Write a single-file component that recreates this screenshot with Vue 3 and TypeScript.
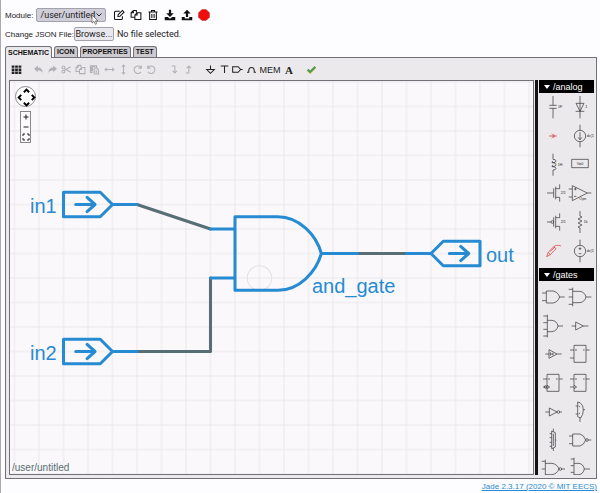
<script setup lang="ts">
import { ref } from 'vue'

interface Tool {
  id: string
  title: string
  path: string
  fill?: boolean
}

interface Part {
  name: string
  d: string
  red?: boolean
  label?: string
  lx?: number
  ly?: number
}

interface Library {
  name: string
  rows: number
  parts: Part[]
}

const modulePath = ref('/user/untitled')
const activeTab = ref('SCHEMATIC')
const tabs = ['SCHEMATIC', 'ICON', 'PROPERTIES', 'TEST']
const fileInput = ref<HTMLInputElement | null>(null)
const fileName = ref('No file selected.')

function browse(): void {
  fileInput.value?.click()
}

function fileChosen(): void {
  fileName.value = fileInput.value?.files?.[0]?.name ?? 'No file selected.'
}

const moduleTools: Tool[] = [
  { id: 'edit', title: 'Edit module', path: 'M9 3H3.5Q2 3 2 4.500V12.500Q2 14 3.500 14H11Q12.500 14 12.500 12.500V9.500M6.500 10L7 7.500L12.500 2L14.700 4.200L9.200 9.700Z' },
  { id: 'copy', title: 'Copy module', path: 'M6 11H1.500V5L4.500 2H8.500V4.500M4.500 2V5H1.500M6.500 8L9.500 5H14.500V14H6.500ZM9.500 5V8H6.500' },
  { id: 'delete', title: 'Delete module', path: 'M2 4H14M6 4V2H10V4M3.500 4V14H12.500V4M6.500 6.500V12M9.500 6.500V12' },
  { id: 'download', title: 'Download modules', path: 'M6.500 1H9.500V5.500H13L8 10.500L3 5.500H6.500ZM1 10.500H5L8 13L11 10.500H15V15H1Z', fill: true },
  { id: 'upload', title: 'Upload modules', path: 'M8 1L13 6H9.500V10.500H6.500V6H3ZM1 10.500H5V12.500H11V10.500H15V15H1Z', fill: true },
]

const editTools: Tool[] = [
  { id: 'undo', title: 'Undo', path: 'M7 2V5Q14 5 14 13Q12 9 7 9V12L1.500 7Z', fill: true },
  { id: 'redo', title: 'Redo', path: 'M9 2V5Q2 5 2 13Q4 9 9 9V12L14.500 7Z', fill: true },
  { id: 'cut', title: 'Cut', path: 'M5.500 9L14 4M5.500 7L14 12M5.500 5A2 2 0 1 1 1.500 5A2 2 0 1 1 5.500 5M5.500 11A2 2 0 1 1 1.500 11A2 2 0 1 1 5.500 11' },
  { id: 'clone', title: 'Copy', path: 'M6 11H1.500V5L4.500 2H8.500V4.500M4.500 2V5H1.500M6.500 8L9.500 5H14.500V14H6.500ZM9.500 5V8H6.500' },
  { id: 'paste', title: 'Paste', path: 'M5.500 12.500H2V2.500H11V5M4 3.500H9M3.500 4V11M5 4V11M7.500 6H11.500L14 8.500V14.500H7.500ZM9.500 10H12M9.500 12H12' },
  { id: 'flip-h', title: 'Flip horizontally', path: 'M1.500 8H14.500M4 5.500L1.500 8L4 10.500M12 5.500L14.500 8L12 10.500' },
  { id: 'flip-v', title: 'Flip vertically', path: 'M8 1.500V14.500M5.500 4L8 1.500L10.500 4M5.500 12L8 14.500L10.500 12' },
  { id: 'rotate-cw', title: 'Rotate clockwise', path: 'M13 11.500A5.500 5.500 0 1 1 12 4L13 5.500M13.500 2V6H9.500' },
  { id: 'rotate-ccw', title: 'Rotate counterclockwise', path: 'M3 11.500A5.500 5.500 0 1 0 4 4L3 5.500M2.500 2V6H6.500' },
]

const levelTools: Tool[] = [
  { id: 'down', title: 'Down in the hierarchy', path: 'M4 3H8.500V13M5.500 10L8.500 13L11.500 10' },
  { id: 'up', title: 'Up in the hierarchy', path: 'M4 13H8.500V3M5.500 6L8.500 3L11.500 6' },
]

const insertTools: Tool[] = [
  { id: 'ground', title: 'Ground', path: 'M8 2V8M2.500 8H13.500L8 13.500Z' },
  { id: 'vdd', title: 'Power supply', path: 'M2.500 3H13.500M8 3V13' },
  { id: 'port', title: 'Port', path: 'M1 4H9L12.500 8L9 12H1ZM12.500 8H15.500' },
  { id: 'jumper', title: 'Jumper', path: 'M1.500 12H4V10Q4 5 8 5Q12 5 12 10V12H14.500' },
]

const regBox = 'M-18 -26H18V25H-18ZM-30 -12H-18M-30 12H-18M18 -12H29M-15 -12H-9M9 -12H14'

const libraries: Library[] = [
  {
    name: '/analog',
    rows: 6,
    parts: [
      { name: 'Capacitor', d: 'M0 -33V-5M-11 -5H11M-11 4H11M0 4V34', label: '1F', lx: 15, ly: 4 },
      { name: 'Diode', d: 'M0 -33V34M-12 -11H12L0 13ZM-13 13H13', label: '1', lx: 16, ly: 4 },
      { name: 'Connector', d: 'M-12 0H12M-4 -6L3 0L-4 6M3 -5V5', red: true },
      { name: 'Current source', d: 'M0 -34V-17M0 17V34M-17 0A17 17 0 1 1 17 0A17 17 0 1 1 -17 0M0 -11V11M-6 4L0 11L6 4', label: 'dc(1)', lx: 20, ly: 3 },
      { name: 'Inductor', d: 'M0 -34V-17Q9 -17 9 -12Q9 -7 -2 -7Q9 -7 9 -1Q9 5 -2 5Q9 5 9 10Q9 15 0 15V32M-2 -7Q-6 -9 0 -11M-2 5Q-6 3 0 1', label: '1H', lx: 14, ly: 3 },
      { name: 'Voltage probe', d: 'M-25 -17H25V8H-25Z', label: 'V=0', lx: -10, ly: -1 },
      { name: 'N-channel MOSFET', d: 'M-18 0H2M2 -14V14M8 -19V19M8 -13H20V-26M8 13H20V26', label: '2/1', lx: 23, ly: 4 },
      { name: 'Operational amplifier', d: 'M-23 -22V23L22 0ZM-34 -12H-23M-34 12H-23M22 0H34M-18 -12H-10M-14 -16V-8M-18 10H-11', label: 'Opn', lx: -2, ly: 22 },
      { name: 'P-channel MOSFET', d: 'M-18 0H-6M-6 0A4 4 0 1 1 2 0A4 4 0 1 1 -6 0M2 -14V14M8 -19V19M8 -13H20V-26M8 13H20V26', label: '2/1', lx: 23, ly: 4 },
      { name: 'Resistor', d: 'M0 -33V-18L6 -15L-6 -9L6 -3L-6 3L6 9L-6 15L0 18V33', label: '1k', lx: 11, ly: 4 },
      { name: 'Probe', d: 'M-19 17L-14 4L2 -13L9 -7L-8 11ZM-14 4L-8 11M-8 1L6 -12M2 -13Q10 -20 24 -15', red: true },
      { name: 'Voltage source', d: 'M0 -34V-17M0 17V34M-17 0A17 17 0 1 1 17 0A17 17 0 1 1 -17 0M-4 -7H4M0 -11V-3M-4 8H4', label: 'dc(1)', lx: 20, ly: 3 },
    ],
  },
  {
    name: '/gates',
    rows: 7,
    parts: [
      { name: 'and2', d: 'M-20 -18H0Q14 -16 20 0Q14 16 0 18H-20ZM-33 -12H-20M-33 11H-20M20 0H35' },
      { name: 'and3', d: 'M-22 -28V28M-22 -17H0Q14 -15 18 0Q14 15 0 17H-22M-34 -23H-22M-34 0H-22M-34 22H-22M18 0H34' },
      { name: 'and4', d: 'M-17 -34V34M-17 -17H-3Q12 -15 15 0Q12 15 -3 17H-17M-29 -30H-17M-29 -10H-17M-29 10H-17M-29 30H-17M15 0H30' },
      { name: 'buffer', d: 'M-13 -12V12L10 0ZM-25 0H-13M10 0H25' },
      { name: 'tristate', d: 'M-12 -13V13L12 0ZM-23 0H-12M12 0H26M-8 -5V5M-8 0H0M0 -4V4' },
      { name: 'dlatch', d: regBox },
      { name: 'dregne', d: regBox + 'M-18 7L-10 12L-18 17M-26 12A4 4 0 1 1 -18 12A4 4 0 1 1 -26 12' },
      { name: 'dreg', d: regBox + 'M-18 7L-10 12L-18 17' },
      { name: 'inverter', d: 'M-11 -12V12L12 0ZM-23 0H-11M12 0A4 4 0 1 1 20 0A4 4 0 1 1 12 0M20 0H27' },
      { name: 'mux2', d: 'M-7 -30V14L2 18Q10 8 10 -6Q10 -22 0 -28ZM-13 -18H-7M-13 6H-7M10 -7H15M0 17V30M-4 -18L0 -15M-4 6L0 3' },
      { name: 'mux4', d: 'M-4 -27V26L7 21V-22ZM-10 -19H-4M-10 -7H-4M-10 7H-4M-10 19H-4M7 0H10M1 -34V-25M1 24V33M1 -19V18' },
      { name: 'nand2', d: 'M-22 -18H0Q12 -15 17 0Q12 15 0 18H-22ZM-33 -12H-22M-33 11H-22M17 0A4 4 0 1 1 25 0A4 4 0 1 1 17 0M25 0H34' },
      { name: 'nand3', d: 'M-23 -28V28M-23 -17H-3Q12 -15 18 0Q12 15 -3 17H-23M-34 -23H-23M-34 0H-23M-34 22H-23M18 0A4 4 0 1 1 26 0A4 4 0 1 1 18 0M26 0H36' },
      { name: 'nand4', d: 'M-18 -34V34M-18 -17H-3Q10 -15 13 0Q10 15 -3 17H-18M-28 -30H-18M-28 -10H-18M-28 10H-18M13 0H30' },
    ],
  },
]
</script>

<template>
  <main class="jade">
    <div class="row module-row">
      <label for="module">Module:</label>
      <span class="select-wrap">
        <select id="module" v-model="modulePath">
          <option>/user/untitled</option>
        </select>
        <svg class="chevron" viewBox="0 0 8 8"><path d="M1.500 2.500L4 5L6.500 2.500" /></svg>
        <svg class="pointer" viewBox="0 0 8 11"><path d="M1 1V9L3 7.300L4.300 10.300L5.700 9.700L4.500 6.900H7Z" /></svg>
      </span>
      <div class="module-tools">
        <button v-for="t in moduleTools" :key="t.id" type="button" :aria-label="t.title">
          <svg viewBox="0 0 16 16" :class="{ solid: t.fill }"><path :d="t.path" /></svg>
        </button>
        <button type="button" aria-label="Record">
          <svg viewBox="0 0 16 16" class="record"><path d="M5 1H11L15 5V11L11 15H5L1 11V5Z" /></svg>
        </button>
      </div>
    </div>

    <div class="row file-row">
      <label for="json-file">Change JSON File:</label>
      <input id="json-file" ref="fileInput" class="file-input" type="file" accept=".json" @change="fileChosen" />
      <button type="button" class="browse" @click="browse">Browse...</button>
      <span class="file-name">{{ fileName }}</span>
    </div>

    <nav class="tabs">
      <button
        v-for="tab in tabs"
        :key="tab"
        type="button"
        class="tab"
        :class="{ active: tab === activeTab }"
        @click="activeTab = tab"
      >{{ tab }}</button>
    </nav>

    <section class="panel">
      <div class="toolbar">
        <button type="button" class="grid-button" aria-label="Toggle grid">
          <svg viewBox="0 0 16 16" class="solid">
            <path d="M1 2H5V5.500H1ZM6 2H10V5.500H6ZM11 2H15V5.500H11ZM1 6.500H5V10H1ZM6 6.500H10V10H6ZM11 6.500H15V10H11ZM1 11H5V14.500H1ZM6 11H10V14.500H6ZM11 11H15V14.500H11Z" />
          </svg>
        </button>
        <div class="tool-group edit-group">
          <button v-for="t in editTools" :key="t.id" type="button" :aria-label="t.title">
            <svg viewBox="0 0 16 16" :class="{ solid: t.fill }"><path :d="t.path" /></svg>
          </button>
        </div>
        <div class="tool-group level-group">
          <button v-for="t in levelTools" :key="t.id" type="button" :aria-label="t.title">
            <svg viewBox="0 0 16 16"><path :d="t.path" /></svg>
          </button>
        </div>
        <div class="tool-group insert-group">
          <button v-for="t in insertTools" :key="t.id" type="button" :aria-label="t.title">
            <svg viewBox="0 0 16 16"><path :d="t.path" /></svg>
          </button>
        </div>
        <button type="button" class="mem-button">MEM</button>
        <button type="button" class="text-button">A</button>
        <button type="button" class="check-button" aria-label="Check">
          <svg viewBox="0 0 16 16">
            <path class="check-edge" d="M2.500 9L6 12.500L13.500 5" />
            <path class="check-mark" d="M2.500 8L6 11.500L13.500 4" />
          </svg>
        </button>
      </div>

      <div class="workspace">
        <div class="canvas">
          <svg class="schematic">
            <defs>
              <pattern id="grid" width="8" height="8" patternUnits="userSpaceOnUse" patternTransform="translate(4.500 1) scale(3.0625)">
                <path class="grid-line" d="M0 0H8M0 8H8M0 0V8M8 0V8" />
              </pattern>
            </defs>
            <rect width="100%" height="100%" fill="url(#grid)" />
            <g transform="translate(4.500 1) scale(3.0625)">
              <circle class="origin" cx="80" cy="64" r="4" />
              <g class="wire">
                <path d="M40 40L64 48" />
                <path d="M64 64V88H40" />
                <path d="M112 56H128" />
              </g>
              <g class="component">
                <path d="M16 36H28L32 40L28 44H16ZM32 40H40" />
                <path d="M20 40H26M23.700 37.700L26.300 40L23.700 42.300" />
                <path d="M16 84H28L32 88L28 92H16ZM32 88H40" />
                <path d="M20 88H26M23.700 85.700L26.300 88L23.700 90.300" />
                <path d="M152 52H140L136 56L140 60H152ZM128 56H136" />
                <path d="M142 56H148M145.700 53.700L148.300 56L145.700 58.300" />
                <path d="M72 44H86C93 44 98.500 50 100.200 56C98.500 62 93 68 86 68H72ZM64 48H72M64 64H72M100.200 56H112" />
              </g>
            </g>
            <g class="names">
              <text x="20" y="132">in1</text>
              <text x="20" y="279">in2</text>
              <text x="476" y="181">out</text>
              <text x="302" y="212">and_gate</text>
            </g>
          </svg>

          <div class="pan">
            <button type="button" class="pan-up" aria-label="Pan up"><svg viewBox="0 0 8 8"><path d="M1 6L4 3L7 6" /></svg></button>
            <button type="button" class="pan-left" aria-label="Pan left"><svg viewBox="0 0 8 8"><path d="M6 1L3 4L6 7" /></svg></button>
            <button type="button" class="pan-right" aria-label="Pan right"><svg viewBox="0 0 8 8"><path d="M2 1L5 4L2 7" /></svg></button>
            <button type="button" class="pan-down" aria-label="Pan down"><svg viewBox="0 0 8 8"><path d="M1 2L4 5L7 2" /></svg></button>
          </div>
          <div class="zoom">
            <button type="button" aria-label="Zoom in"><svg viewBox="0 0 8 8"><path d="M1.500 4H6.500M4 1.500V6.500" /></svg></button>
            <button type="button" aria-label="Zoom out"><svg viewBox="0 0 8 8"><path d="M1.500 4H6.500" /></svg></button>
            <button type="button" aria-label="Zoom to fit"><svg viewBox="0 0 8 8"><path d="M1 3V1H3M5 1H7V3M7 5V7H5M3 7H1V5" /></svg></button>
          </div>
          <div class="status">{{ modulePath }}</div>
        </div>

        <div class="divider"></div>

        <aside class="palette">
          <section v-for="lib in libraries" :key="lib.name" class="library">
            <h2><span class="twist"></span>{{ lib.name }}</h2>
            <div class="parts" :class="'rows-' + lib.rows">
              <button v-for="p in lib.parts" :key="p.name" type="button" class="part" :aria-label="p.name">
                <svg viewBox="-42 -42 84 84" :class="{ red: p.red }">
                  <path :d="p.d" />
                  <text v-if="p.label" :x="p.lx" :y="p.ly">{{ p.label }}</text>
                </svg>
              </button>
            </div>
          </section>
        </aside>
      </div>
    </section>

    <footer><a href="#about">Jade 2.3.17 (2020 © MIT EECS)</a></footer>
  </main>
</template>

<style>
body {
  background: #fdfcfe;
}
</style>

<style scoped>
.jade {
  box-sizing: border-box;
  display: flex;
  flex-direction: column;
  height: 100vh;
  min-height: 320px;
  padding: 6px 3px 0 4px;
  border-left: 1px solid #aba9af;
  font-family: "Liberation Sans", Arial, sans-serif;
  font-size: 8px;
  color: #222;
}

button {
  display: flex;
  align-items: center;
  justify-content: center;
  margin: 0;
  padding: 0;
  border: 0;
  background: none;
  color: inherit;
  font: inherit;
}

svg {
  display: block;
  fill: none;
  stroke: currentColor;
}

.solid {
  fill: currentColor;
  stroke: none;
}

.row {
  display: flex;
  align-items: center;
  flex: none;
}

.module-row {
  height: 18px;
}

.select-wrap {
  position: relative;
  display: flex;
  margin-left: 3px;
}

select {
  appearance: none;
  box-sizing: border-box;
  width: 70px;
  height: 14px;
  margin: 0;
  padding: 0 0 0 3px;
  border: 1px solid #a3a1ac;
  border-radius: 2px;
  background: #d0ced9;
  color: #222;
  font: 9px/12px Roboto, sans-serif;
}

.chevron {
  position: absolute;
  top: 3px;
  right: 3px;
  width: 8px;
  height: 8px;
}

.pointer {
  position: absolute;
  top: 6px;
  left: 55px;
  width: 8px;
  height: 11px;
  fill: #fff;
  stroke: #555;
  stroke-width: 0.7;
}

.module-tools {
  display: flex;
  margin-left: 4px;
  color: #111;
}

.module-tools button {
  width: 17px;
  height: 16px;
}

.module-tools svg {
  width: 12px;
  height: 12px;
  stroke-width: 1.4;
}

.module-tools .record {
  fill: #f20d0d;
  stroke: #c01818;
  stroke-width: 1;
}

.file-row {
  height: 20px;
}

.file-row label {
  white-space: nowrap;
}

.file-input {
  position: absolute;
  width: 1px;
  height: 1px;
  opacity: 0;
  pointer-events: none;
}

.browse {
  box-sizing: border-box;
  width: 40px;
  height: 14px;
  border: 1px solid #a3a1ac;
  border-radius: 2px;
  background: #e9e8ee;
  font: 9px/12px Roboto, sans-serif;
}

.file-name {
  margin-left: 3px;
  font: 9px/12px Roboto, sans-serif;
}

.tabs {
  position: relative;
  display: flex;
  align-items: flex-end;
  gap: 2px;
  flex: none;
  margin-top: 2px;
}

.tab {
  box-sizing: border-box;
  height: 11px;
  padding: 0 2px;
  border: 1px solid #737177;
  border-bottom: 0;
  border-radius: 3px 3px 0 0;
  background: #cccace;
  color: #111;
  font-size: 7px;
  font-weight: bold;
  line-height: 10px;
}

.tab.active {
  height: 12px;
  margin-bottom: -1px;
  background: #ebe9ec;
}

.panel {
  display: flex;
  flex: 1;
  flex-direction: column;
  min-height: 0;
  border: 1px solid #737177;
  background: #ebe9ec;
}

.toolbar {
  display: flex;
  align-items: center;
  flex: none;
  height: 22px;
  padding: 1px 0 0 3px;
  box-sizing: border-box;
  color: #222;
}

.toolbar svg {
  width: 11px;
  height: 11px;
  stroke-width: 1.5;
}

.toolbar button {
  height: 16px;
}

.grid-button {
  width: 14px;
}

.tool-group {
  display: grid;
  grid-auto-flow: column;
  grid-auto-columns: 1fr;
}

.edit-group {
  width: 128px;
  margin-left: 8px;
  color: #b2b0b4;
}

.level-group {
  width: 28px;
  margin-left: 8px;
  color: #b2b0b4;
}

.insert-group {
  width: 54px;
  margin-left: 9px;
}

.mem-button {
  width: 24px;
  font-size: 9px;
}

.text-button {
  width: 14px;
  font-family: "Liberation Serif", serif;
  font-size: 11px;
  font-weight: bold;
}

.check-button {
  width: 14px;
  margin-left: 8px;
}

.toolbar .check-mark {
  stroke: #4c9a58;
  stroke-width: 3;
}

.toolbar .check-edge {
  stroke: #d8b23c;
  stroke-width: 3;
}

.workspace {
  display: flex;
  flex: 1;
  min-height: 0;
  padding: 0 2px 3px 3px;
}

.canvas {
  position: relative;
  flex: 1;
  min-width: 0;
  overflow: hidden;
  border: 1px solid #737177;
  background: #faf8fb;
}

.schematic {
  position: absolute;
  width: 100%;
  height: 100%;
  stroke: none;
}

.grid-line {
  stroke: #e9e7eb;
  stroke-width: 0.33;
}

.origin {
  stroke: #e2e0e4;
  stroke-width: 0.33;
}

.wire,
.component {
  stroke-width: 1;
  stroke-linecap: round;
  stroke-linejoin: round;
}

.wire {
  stroke: #586e75;
}

.component {
  stroke: #268bd2;
}

.names {
  fill: #268bd2;
  font-size: 20px;
}

.pan {
  position: absolute;
  top: 5px;
  left: 5px;
  box-sizing: border-box;
  display: grid;
  grid-template-columns: repeat(3, 1fr);
  grid-template-rows: repeat(3, 1fr);
  width: 21px;
  height: 21px;
  border: 1px solid #8a888d;
  border-radius: 50%;
  background: #fff;
  color: #000;
}

.pan svg {
  width: 7px;
  height: 7px;
  stroke-width: 2.2;
}

.pan-up {
  grid-area: 1 / 2;
}

.pan-left {
  grid-area: 2 / 1;
}

.pan-right {
  grid-area: 2 / 3;
}

.pan-down {
  grid-area: 3 / 2;
}

.zoom {
  position: absolute;
  top: 30px;
  left: 10px;
  box-sizing: border-box;
  display: grid;
  grid-template-rows: repeat(3, 1fr);
  width: 11px;
  height: 32px;
  border: 1px solid #8a888d;
  background: #fbfafc;
}

.zoom svg {
  width: 8px;
  height: 8px;
}

.status {
  position: absolute;
  bottom: 1px;
  left: 2px;
  color: #586e75;
  font-size: 10px;
  line-height: 11px;
}

.divider {
  flex: none;
  width: 3px;
  margin: 0 1px;
  background: #151515;
}

.palette {
  flex: none;
  width: 55px;
  overflow: hidden;
}

.library h2 {
  display: flex;
  align-items: center;
  gap: 3px;
  height: 13px;
  margin: 0;
  padding-left: 5px;
  background: #000;
  color: #fff;
  font-size: 9px;
  font-weight: normal;
}

.twist {
  border: 3px solid transparent;
  border-top: 4px solid #fff;
  border-bottom: 0;
}

.parts {
  display: grid;
  grid-template-columns: 1fr 1fr;
  grid-auto-rows: 1fr;
  margin-bottom: 3px;
}

.rows-6 {
  height: 172px;
}

.rows-7 {
  height: 200px;
  margin-top: 2px;
}

.part {
  min-width: 0;
  min-height: 0;
}

.part svg {
  flex: none;
  width: 28px;
  height: 28px;
  overflow: visible;
  color: #3c3b3e;
  stroke-width: 2.2;
}

.part .red {
  color: #dd3a3a;
}

.part text {
  fill: #222;
  stroke: none;
  font-size: 11px;
}

footer {
  flex: none;
  height: 14px;
  text-align: right;
  line-height: 16px;
}

footer a {
  color: #268bd2;
}
</style>
